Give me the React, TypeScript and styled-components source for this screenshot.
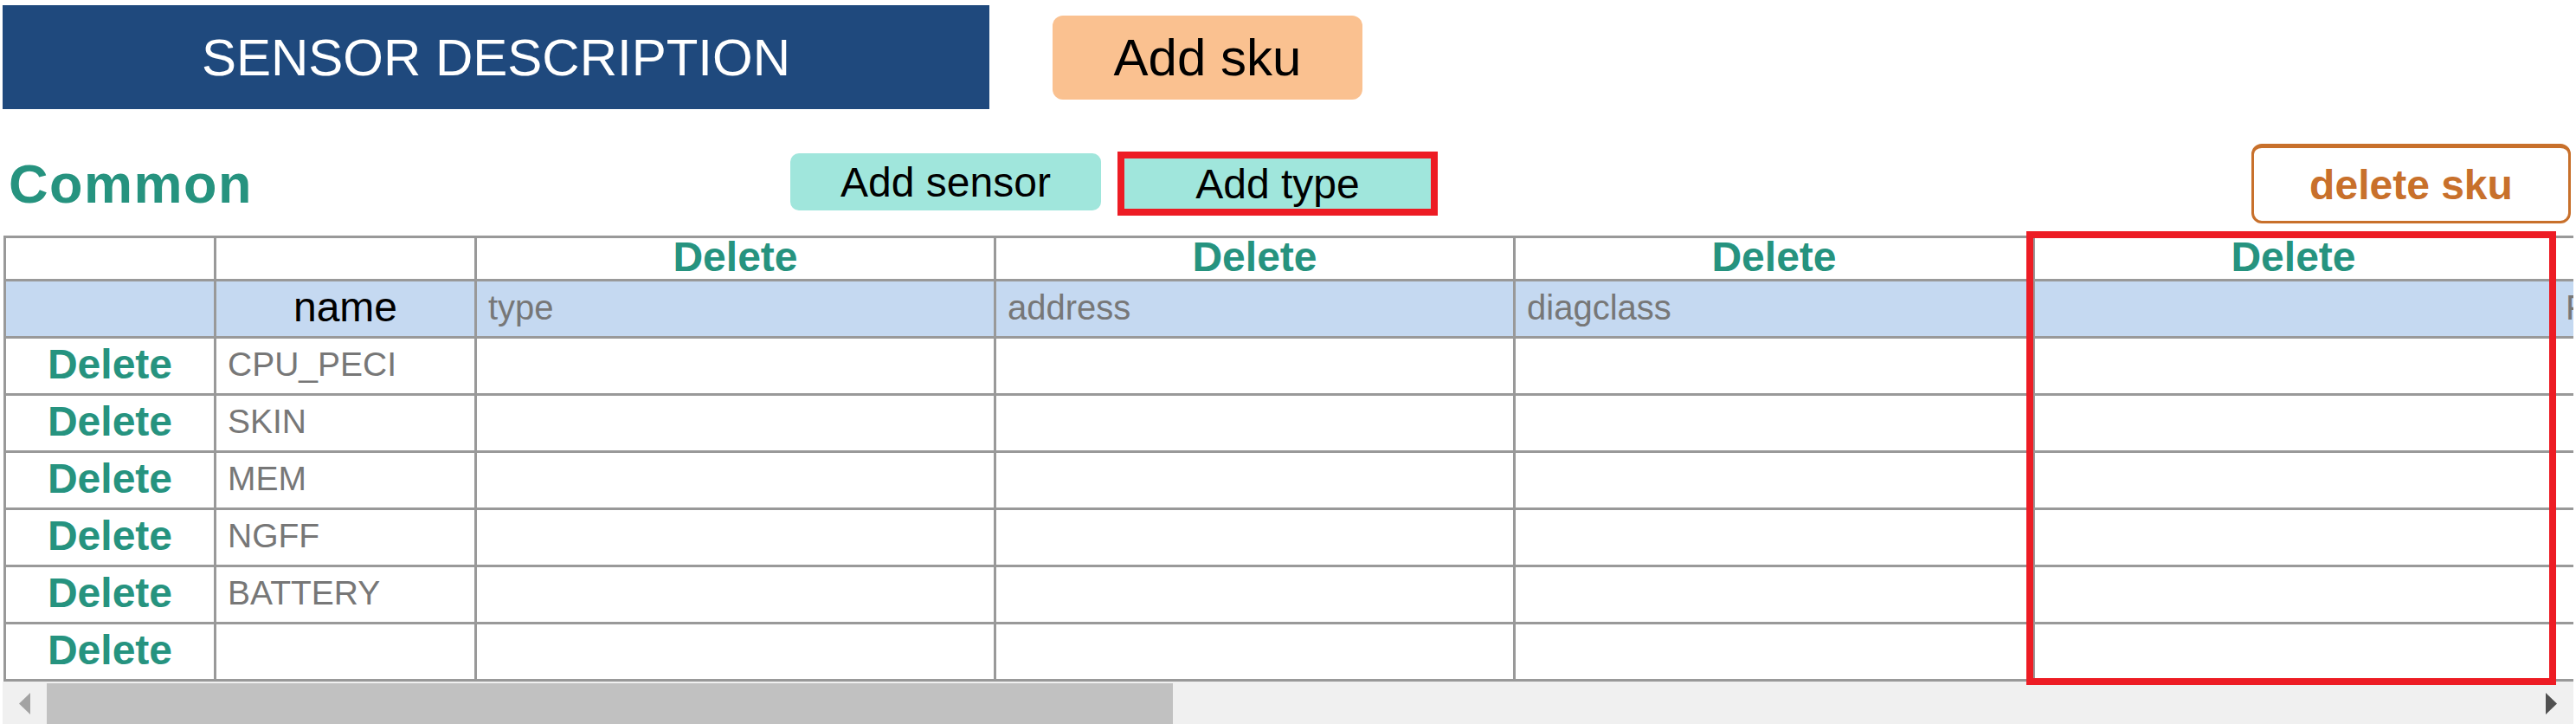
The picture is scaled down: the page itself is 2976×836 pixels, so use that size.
import React from "react";
import styled, { createGlobalStyle } from "styled-components";

const GlobalStyle = createGlobalStyle`
  html, body {
    margin: 0;
    padding: 0;
    background: #ffffff;
  }
  body {
    font-family: "Liberation Sans", Arial, sans-serif;
  }
`;

const columns = [
  { label: "type", deletable: true },
  { label: "address", deletable: true },
  { label: "diagclass", deletable: true },
  { label: "", deletable: true },
  { label: "Fan", deletable: false },
];

const sensors = ["CPU_PECI", "SKIN", "MEM", "NGFF", "BATTERY", ""];

function App() {
  return (
    <Page>
      <GlobalStyle />
      <TopBar>
        <Banner>SENSOR DESCRIPTION</Banner>
        <SkuButton>Add sku</SkuButton>
      </TopBar>

      <SectionBar>
        <SectionTitle>Common</SectionTitle>
        <ActionButton>Add sensor</ActionButton>
        <ActionButton $marked>Add type</ActionButton>
        <DeleteSkuButton>delete sku</DeleteSkuButton>
      </SectionBar>

      <TableArea>
        <TableScroll>
          <Grid>
            <colgroup>
              <Col $width={243} />
              <Col $width={301} />
              {columns.map((_, i) => (
                <Col key={i} $width={600} />
              ))}
            </colgroup>
            <tbody>
              <DeleteRow>
                <Cell />
                <Cell />
                {columns.map((c, i) => (
                  <DeleteCell key={i}>{c.deletable ? "Delete" : ""}</DeleteCell>
                ))}
              </DeleteRow>
              <HeadRow>
                <Cell />
                <NameHead>name</NameHead>
                {columns.map((c, i) => (
                  <FieldHead key={i}>{c.label}</FieldHead>
                ))}
              </HeadRow>
              {sensors.map((name, r) => (
                <DataRow key={r}>
                  <DeleteCell>Delete</DeleteCell>
                  <FieldCell>{name}</FieldCell>
                  {columns.map((_, i) => (
                    <FieldCell key={i} />
                  ))}
                </DataRow>
              ))}
            </tbody>
          </Grid>
        </TableScroll>

        <ScrollBar>
          <ScrollButton>
            <svg width="13" height="25" viewBox="0 0 13 25">
              <polygon points="13,0 13,25 0,12.5" fill="#a3a3a3" />
            </svg>
          </ScrollButton>
          <ScrollTrack>
            <ScrollThumb />
          </ScrollTrack>
          <ScrollButton>
            <svg width="13" height="25" viewBox="0 0 13 25">
              <polygon points="0,0 13,12.5 0,25" fill="#505050" />
            </svg>
          </ScrollButton>
        </ScrollBar>

        <ColumnMark />
      </TableArea>
    </Page>
  );
}

export default App;

const Page = styled.div`
  width: 2976px;
  padding: 6px 6px 0 3px;
  box-sizing: border-box;
`;

const TopBar = styled.div`
  display: flex;
  align-items: center;
  column-gap: 73px;
`;

const Banner = styled.div`
  width: 1140px;
  height: 120px;
  background: #1f497d;
  color: #ffffff;
  font-size: 60px;
  display: flex;
  align-items: center;
  justify-content: center;
`;

const SkuButton = styled.div`
  width: 358px;
  height: 97px;
  border-radius: 12px;
  background: #fac190;
  color: #000000;
  font-size: 60px;
  display: flex;
  align-items: center;
  justify-content: center;
`;

const SectionBar = styled.div`
  display: flex;
  align-items: center;
  height: 100px;
  margin-top: 36px;
`;

const SectionTitle = styled.h2`
  margin: 0 0 0 7px;
  width: 903px;
  font-size: 63px;
  line-height: 1;
  font-weight: 700;
  letter-spacing: 1.5px;
  color: #26937f;
`;

const ActionButton = styled.div<{ $marked?: boolean }>`
  width: ${(p) => (p.$marked ? 354 : 359)}px;
  height: ${(p) => (p.$marked ? 58 : 66)}px;
  margin-left: ${(p) => (p.$marked ? 27 : 0)}px;
  margin-top: ${(p) => (p.$marked ? 0 : -4)}px;
  border-radius: ${(p) => (p.$marked ? 0 : 10)}px;
  background: #a0e6dc;
  color: #000000;
  font-size: 48px;
  display: flex;
  align-items: center;
  justify-content: center;
  outline: ${(p) => (p.$marked ? "8px solid #ed1c24" : "none")};
`;

const DeleteSkuButton = styled.div`
  margin-left: auto;
  width: 369px;
  height: 92px;
  box-sizing: border-box;
  border: 3px solid #c8702b;
  border-top-width: 5px;
  border-radius: 12px;
  color: #c8702b;
  font-size: 48px;
  font-weight: 700;
  display: flex;
  align-items: center;
  justify-content: center;
`;

const TableArea = styled.div`
  position: relative;
  width: 2970px;
  margin-top: 8px;
`;

const TableScroll = styled.div`
  overflow: hidden;
  padding-top: 2px;
`;

const Grid = styled.table`
  border-collapse: collapse;
  table-layout: fixed;
  width: 3544px;
  margin-left: 1px;
`;

const Col = styled.col<{ $width: number }>`
  width: ${(p) => p.$width}px;
`;

const Cell = styled.td`
  border: 3px solid #999999;
  padding: 0 0 4px;
  line-height: 40px;
`;

const DeleteRow = styled.tr`
  height: 50px;
`;

const HeadRow = styled.tr`
  height: 66px;
  background: #c5d9f1;
`;

const DataRow = styled.tr`
  height: 66px;
`;

const DeleteCell = styled(Cell)`
  text-align: center;
  font-size: 48px;
  font-weight: 700;
  color: #26937f;
`;

const NameHead = styled(Cell)`
  text-align: center;
  font-size: 48px;
  color: #000000;
`;

const FieldHead = styled(Cell)`
  padding-left: 13px;
  font-size: 40px;
  color: #777777;
  white-space: nowrap;
`;

const FieldCell = styled(Cell)`
  padding-left: 13px;
  font-size: 39px;
  color: #777777;
  white-space: nowrap;
`;

const ScrollBar = styled.div`
  display: flex;
  height: 50px;
  background: #f0f0f0;
`;

const ScrollButton = styled.div`
  width: 51px;
  display: flex;
  align-items: center;
  justify-content: center;
`;

const ScrollTrack = styled.div`
  flex: 1;
  padding: 2px 0 1px;
`;

const ScrollThumb = styled.div`
  width: 1301px;
  height: 100%;
  background: #c1c1c1;
`;

const ColumnMark = styled.div`
  position: absolute;
  left: 2338px;
  top: -3px;
  width: 612px;
  height: 524px;
  box-sizing: border-box;
  border: 8px solid #ed1c24;
  pointer-events: none;
`;
